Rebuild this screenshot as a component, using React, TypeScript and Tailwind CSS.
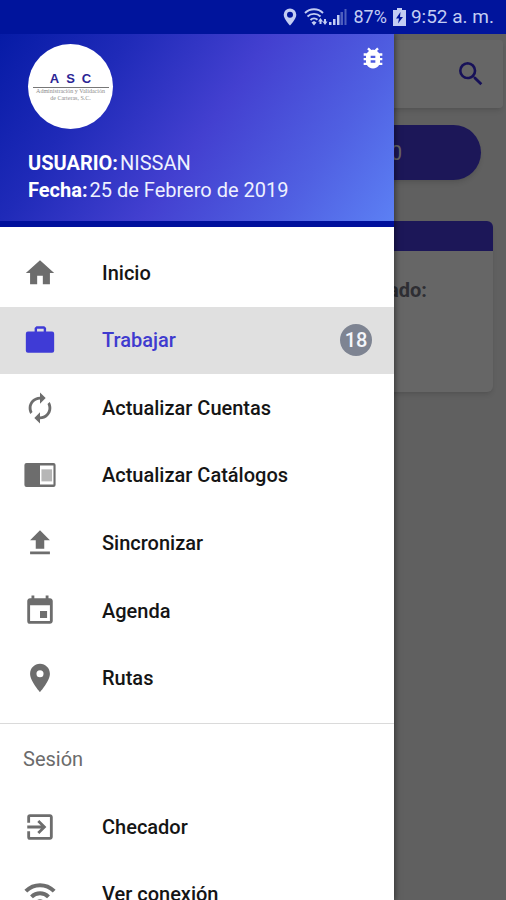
import React from 'react'
import type { IconType } from 'react-icons'
import {
    MdAutorenew,
    MdBugReport,
    MdEvent,
    MdExitToApp,
    MdFileUpload,
    MdHome,
    MdPlace,
    MdSearch,
    MdWifi,
} from 'react-icons/md'

type IconProps = { className?: string }

type Item = {
    label: string
    icon: IconType | ((props: IconProps) => React.ReactElement)
    badge?: number
}

const BriefcaseIcon = ({ className }: IconProps) => {
    return (
        <svg className={className} viewBox="0 0 24 24" fill="currentColor">
            <path fillRule="evenodd" d="M20.500 6H16.300V3.500L15 2.300H9.500L8.200 3.500V6H3.500A1.500 1.500 0 0 0 2 7.500v12A1.500 1.500 0 0 0 3.500 21h17a1.500 1.500 0 0 0 1.500-1.500v-12A1.500 1.500 0 0 0 20.500 6zM14.600 6H9.900V4h4.700z" />
        </svg>
    )
}

const ReaderIcon = ({ className }: IconProps) => {
    return (
        <svg className={className} viewBox="0 0 24 24" fill="currentColor">
            <path fillRule="evenodd" d="M2.500 3.500h19A1.500 1.500 0 0 1 23 5v14a1.500 1.500 0 0 1-1.500 1.500h-19A1.500 1.500 0 0 1 1 19V5a1.500 1.500 0 0 1 1.500-1.500zM12 5.300v13.400h9.500V5.300z" />
            <path d="M13 8h7.500v8.500H13z" opacity="0.5" />
        </svg>
    )
}

const mainItems: Item[] = [
    { label: 'Inicio', icon: MdHome },
    { label: 'Trabajar', icon: BriefcaseIcon, badge: 18 },
    { label: 'Actualizar Cuentas', icon: MdAutorenew },
    { label: 'Actualizar Catálogos', icon: ReaderIcon },
    { label: 'Sincronizar', icon: MdFileUpload },
    { label: 'Agenda', icon: MdEvent },
    { label: 'Rutas', icon: MdPlace },
]

const sessionItems: Item[] = [
    { label: 'Checador', icon: MdExitToApp },
    { label: 'Ver conexión', icon: MdWifi },
]

const StatusBar = () => {
    return (
        <div className="relative z-10 flex h-[34px] shrink-0 items-center justify-end bg-[#00149c] pr-3 text-[#c3cdf3]">
            <svg className="mr-[7px] h-[18px] w-[14px]" viewBox="0 0 14 18" fill="currentColor">
                <path fillRule="evenodd" d="M7 0.500a6.300 6.300 0 0 0-6.300 6.300c0 4.300 6.300 10.700 6.300 10.700s6.300-6.400 6.300-10.700a6.300 6.300 0 0 0-6.300-6.300zm0 3.200a3 3 0 1 1 0 6 3 3 0 0 1 0-6z" />
            </svg>
            <svg className="h-[18px] w-[25px]" viewBox="0 0 25 18" fill="none" stroke="currentColor" strokeWidth="1.900">
                <path d="M1 5C6 0 14 0 19 5M3.500 8.500C7 5 13 5 16.500 8.500M6.500 12c2-2 5-2 7-0.200" />
                <path d="M7.500 14.500l2.500 3 2.500-3-2.500-1.500z" fill="currentColor" stroke="none" />
                <path d="M14 13.500l2.500-3.500 2.500 3.500h-1.500v2.500h-2v-2.500zM18.500 13.500h1.500V11h2v2.500h1.500L21 17z" fill="currentColor" stroke="none" />
            </svg>
            <svg className="mr-[6px] h-[18px] w-[18px]" viewBox="0 0 18 18" fill="currentColor">
                <path d="M0 14h2.500v3H0zM4 11h2.500v6H4zM8 7h2.500v10H8z" />
                <path d="M11.500 4H14v13h-2.500zM15.500 1h2v16h-2z" opacity="0.4" />
            </svg>
            <span className="text-lg leading-6">87%</span>
            <svg className="mr-[5px] ml-[6px] h-[18px] w-[13px]" viewBox="0 0 13 18">
                <path fill="currentColor" d="M4 0h5v2h4v16H0V2h4z" />
                <path fill="#00149c" d="M7.500 4L3 10.500h3L5 15.500l5-6.500H7z" />
            </svg>
            <span className="text-[19px] leading-6">9:52 a. m.</span>
        </div>
    )
}

const DrawerItem = ({ item, active }: { item: Item; active?: boolean }) => {
    const Icon = item.icon
    return (
        <a
            href="#"
            className={`flex h-full w-full items-center pl-[23px] pr-[22px] text-xl font-medium ${active ? 'bg-[#e0e0e0] text-[#3f3bcf]' : 'text-[#151515]'}`}
        >
            <Icon className={`mr-[45px] size-[34px] shrink-0 ${active ? 'text-[#3f3bd6]' : 'text-[#6d6d6d]'}`} />
            <span className="grow">{item.label}</span>
            {item.badge && (
                <span className="flex size-8 items-center justify-center rounded-full bg-[#7e8492] text-[#f4f6fb]">
                    {item.badge}
                </span>
            )}
        </a>
    )
}

const Drawer = () => {
    return (
        <aside className="absolute inset-y-0 left-0 w-[394px] overflow-hidden bg-white shadow-[0_0_6px_1px_rgba(0,0,0,0.5)]">
            <header className="flex items-start justify-between border-b-[6px] border-[#00109c] bg-[linear-gradient(125deg,#061ba6_0%,#1f2ab8_25%,#4340d0_52%,#5060e2_78%,#5c80f4_100%)] pt-[10px] pb-[17px] pl-7 text-white">
                <div>
                    <div className="flex size-[85px] flex-col items-center rounded-full bg-white pt-[27px]">
                        <div className="flex gap-[7px] font-['Liberation_Sans',sans-serif] text-[13px] leading-4 font-bold text-[#2b2494]">
                            <span>A</span>
                            <span>S</span>
                            <span>C</span>
                        </div>
                        <div className="h-[1px] w-[76px] bg-[#777777]" />
                        <div className="text-center font-['Liberation_Serif',serif] text-[6px] leading-[7px] whitespace-nowrap text-[#8c8c8c]">
                            Administración y Validación
                            <br />
                            de Carteras, S.C.
                        </div>
                    </div>
                    <div className="mt-[21px] text-xl leading-[27px] text-[#eef1ff]">
                        <p className="flex gap-[2px]"><b className="font-bold text-white">USUARIO:</b><span>NISSAN</span></p>
                        <p className="flex gap-[2px]"><b className="font-bold text-white">Fecha:</b><span>25 de Febrero de 2019</span></p>
                    </div>
                </div>
                <button type="button" aria-label="Reportar error" className="mr-[7px]">
                    <MdBugReport className="size-7" />
                </button>
            </header>
            <nav>
                <ul className="mt-3 grid h-[473px] auto-rows-fr">
                    {mainItems.map((item) => (
                        <li key={item.label}>
                            <DrawerItem item={item} active={item.label === 'Trabajar'} />
                        </li>
                    ))}
                </ul>
                <div className="mt-[11px] border-t border-[#dadada]">
                    <h2 className="flex h-[69px] items-center pl-[23px] text-xl text-[#6b6b6b]">Sesión</h2>
                    <ul>
                        {sessionItems.map((item) => (
                            <li key={item.label} className="h-[67px]">
                                <DrawerItem item={item} />
                            </li>
                        ))}
                    </ul>
                </div>
            </nav>
        </aside>
    )
}

const App = () => {
    return (
        <div className="flex h-screen flex-col overflow-hidden font-[Roboto,sans-serif]">
            <StatusBar />
            <div className="relative grow bg-[#f0f0f0]">
                <main>
                    <div className="px-[3px] pt-[6px]">
                        <div className="flex h-[68px] items-center justify-end rounded-sm bg-white pr-4 shadow-md">
                            <button type="button" aria-label="Buscar">
                                <MdSearch className="size-8 text-[#3a2cdc]" />
                            </button>
                        </div>
                    </div>
                    <div className="px-[25px] pt-[17px]">
                        <button type="button" className="flex h-[55px] w-full items-center justify-end rounded-full bg-[#463adc] pr-[79px] text-xl text-white shadow-md">
                            0
                        </button>
                    </div>
                    <div className="px-[13px] pt-[41px]">
                        <section className="h-[171px] overflow-hidden rounded-md bg-white shadow-md">
                            <div className="h-[30px] bg-[#463adc]" />
                            <p className="pt-[25px] pr-[66px] text-right text-xl font-bold text-[#737380]">ado:</p>
                        </section>
                    </div>
                </main>
                <div className="absolute inset-0 bg-black/60" />
                <Drawer />
            </div>
        </div>
    )
}

export default App
